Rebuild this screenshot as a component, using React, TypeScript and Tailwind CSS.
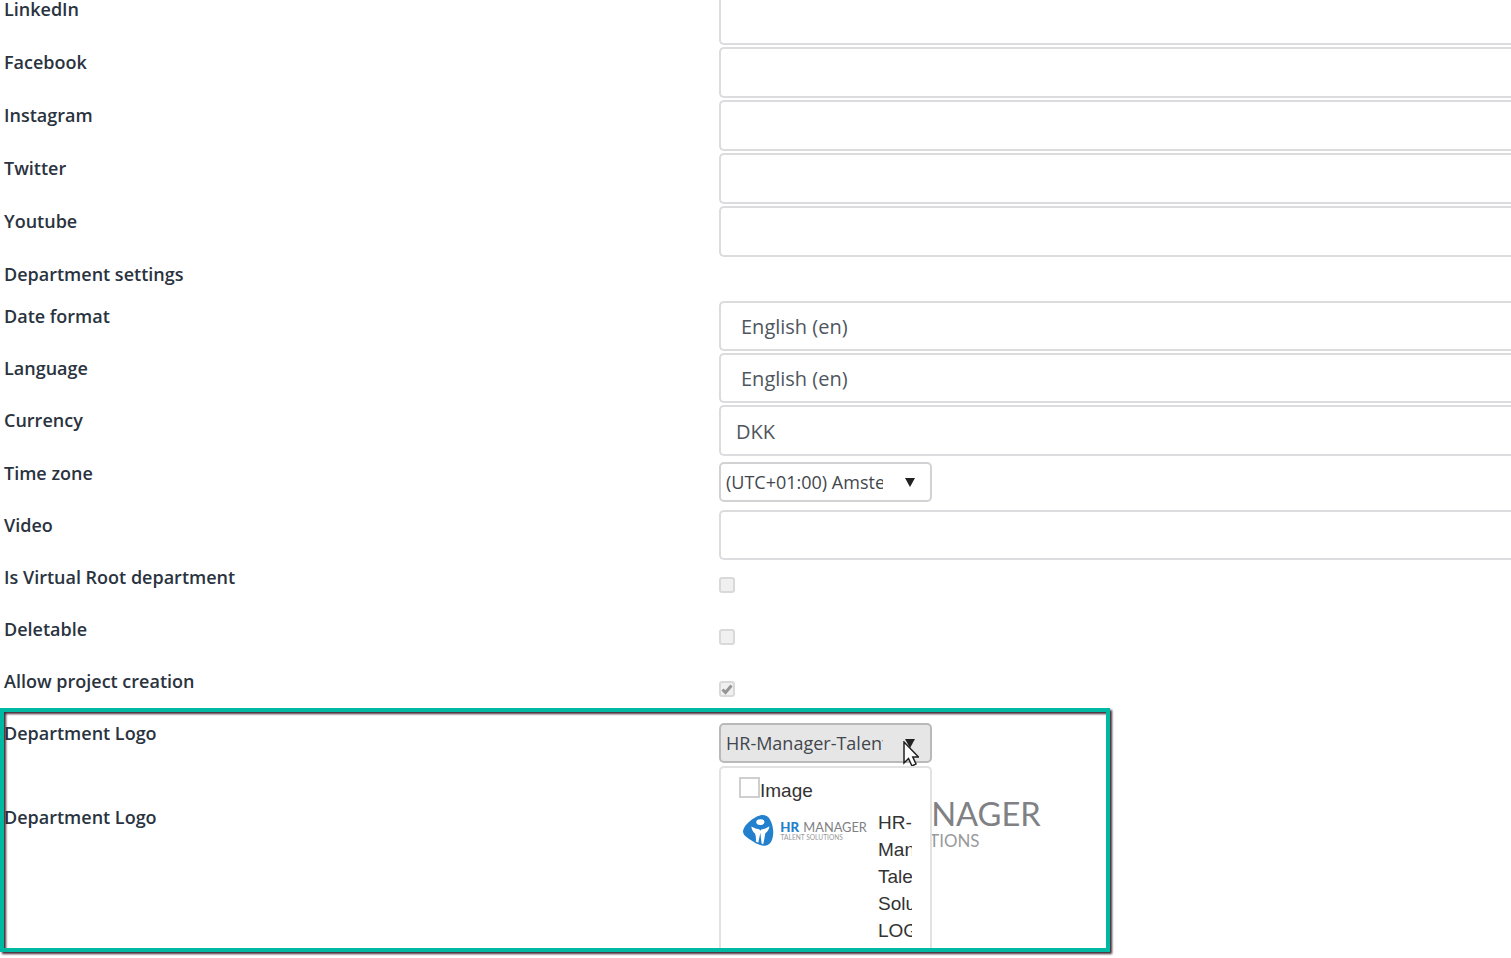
import type { ReactNode } from "react";

const field =
  "block w-full appearance-none rounded-l-[5px] border-2 border-r-0 border-[#dcdcdf] bg-white pt-[2px] text-[20px] text-[#4f565e] outline-none";

function Row({ label, htmlFor, height, children }: { label: string; htmlFor?: string; height: string; children?: ReactNode }) {
  return (
    <div className={`grid grid-cols-[719px_1fr] ${height}`}>
      {htmlFor ? (
        <label htmlFor={htmlFor} className="pt-[3px] pl-1 text-[18px] leading-6 font-semibold text-[#2a3340]">
          {label}
        </label>
      ) : (
        <span className="pt-[3px] pl-1 text-[18px] leading-6 font-semibold text-[#2a3340]">{label}</span>
      )}
      <div className="min-w-0">{children}</div>
    </div>
  );
}

function Caret() {
  return (
    <svg viewBox="0 0 10 9" className="pointer-events-none absolute top-4 right-[17px] h-[9px] w-[10px]" aria-hidden="true">
      <path d="M0 0H10L5 9Z" fill="#222" />
    </svg>
  );
}

function Check({ id, checked = false }: { id: string; checked?: boolean }) {
  return (
    <div className="relative mt-[15px] size-4">
      <input
        id={id}
        type="checkbox"
        disabled
        defaultChecked={checked}
        className="block size-4 appearance-none rounded-[3px] border-2 border-[#d9d9d9] bg-[#f0f0f0]"
      />
      {checked && (
        <svg viewBox="0 0 16 16" className="pointer-events-none absolute inset-0 size-4" aria-hidden="true">
          <path d="M3.5 8.5 6.5 11.5 12.5 4.5" fill="none" stroke="#959595" strokeWidth="3" />
        </svg>
      )}
    </div>
  );
}

function Logo({ className }: { className: string }) {
  return (
    <svg viewBox="0 0 302 75" className={className} role="img" aria-label="HR Manager Talent Solutions">
      <path
        d="M42 1C51-1 61 1 66 10C72 21 75 34 74 46C73 60 68 71 57 74C45 77 28 67 14 57C4 50-1 44 2 35C6 22 26 5 42 1Z"
        fill="#2380cc"
      />
      <ellipse cx="43" cy="17" rx="10" ry="7" fill="#fff" />
      <path d="M21 28C28 32 35 34 41 35L43 38L45 35C52 34 59 31 65 27C64 35 60 40 55 44C53 54 52 63 50 71L46 69L43 43L38 67L32 64C33 56 32 50 30 45C25 41 22 35 21 28Z" fill="#fff" />
      <text x="91" y="40" fill="#2380cc" fontFamily="Lato, sans-serif" fontWeight="900" fontSize="32">
        HR
      </text>
      <text x="147" y="40" fill="#808184" fontFamily="Lato, sans-serif" fontSize="31">
        MANAGER
      </text>
      <text x="92" y="60" fill="#999a9c" fontFamily="Lato, sans-serif" fontSize="16">
        TALENT SOLUTIONS
      </text>
    </svg>
  );
}

export default function App() {
  return (
    <main className="overflow-hidden bg-white pb-[6px] font-['Open_Sans',sans-serif]">
      <form className="-mt-[6px]">
        {["LinkedIn", "Facebook", "Instagram", "Twitter", "Youtube"].map((name) => (
          <Row key={name} label={name} htmlFor={name} height="h-[53px]">
            <input id={name} type="text" className={`${field} h-[51px] px-4`} />
          </Row>
        ))}
        <Row label="Department settings" height="h-[42px]" />
        <Row label="Date format" htmlFor="date-format" height="h-[52px]">
          <select id="date-format" className={`${field} h-[50px] pl-5`}>
            <option>English (en)</option>
          </select>
        </Row>
        <Row label="Language" htmlFor="language" height="h-[52px]">
          <select id="language" className={`${field} h-[50px] pl-5`}>
            <option>English (en)</option>
          </select>
        </Row>
        <Row label="Currency" htmlFor="currency" height="h-[53px]">
          <input id="currency" type="text" defaultValue="DKK" className={`${field} h-[51px] px-[15px]`} />
        </Row>
        <Row label="Time zone" htmlFor="time-zone" height="h-[52px]">
          <div className="relative mt-1 w-[213px]">
            <select
              id="time-zone"
              className="block h-10 w-full appearance-none rounded-[5px] border-2 border-[#d2d2d4] bg-white pr-[47px] pl-[5px] text-[18px] text-[#42474e] outline-none"
            >
              <option>(UTC+01:00) Amsterdam</option>
            </select>
            <Caret />
          </div>
        </Row>
        <Row label="Video" htmlFor="video" height="h-[52px]">
          <input id="video" type="text" className={`${field} h-[50px] px-4`} />
        </Row>
        <Row label="Is Virtual Root department" htmlFor="virtual-root" height="h-[52px]">
          <Check id="virtual-root" />
        </Row>
        <Row label="Deletable" htmlFor="deletable" height="h-[52px]">
          <Check id="deletable" />
        </Row>
        <Row label="Allow project creation" htmlFor="allow-project" height="h-[52px]">
          <Check id="allow-project" checked />
        </Row>

        <section className="relative">
          <Row label="Department Logo" htmlFor="logo-picker" height="h-[84px]">
            <div className="relative z-10 mt-[5px] w-[213px]">
              <button
                id="logo-picker"
                type="button"
                aria-expanded="true"
                className="block h-10 w-full rounded-[5px] border-2 border-[#b9b9b9] bg-[#e6e6e6] pr-[47px] pl-[5px] text-left text-[18px] text-[#42474e]"
              >
                <span className="block overflow-hidden whitespace-nowrap">HR-Manager-Talent-Solutions-LOGO</span>
              </button>
              <Caret />
              <svg viewBox="0 0 16 26" className="pointer-events-none absolute top-[18px] right-[13px] h-[26px] w-4" aria-hidden="true">
                <path d="M1 1V22L5.5 17.5 9 25 13 23 9.8 16H15.5Z" fill="#fff" stroke="#222" strokeWidth="1.5" />
              </svg>
              <div className="absolute top-[43px] left-0 h-[182px] w-full overflow-hidden rounded-t-[5px] border-2 border-b-0 border-[#e2e2e2] bg-white px-[18px] pt-[9px] font-['Liberation_Sans',sans-serif] text-[19px] leading-[27px] text-[#333]">
                <label className="flex">
                  <input type="checkbox" className="size-[21px] appearance-none border-2 border-[#cfcfcf] bg-white" />
                  Image
                </label>
                <div className="mt-[5px] flex">
                  <Logo className="mt-[6px] ml-[3px] h-[31px] w-[126px] shrink-0" />
                  <span className="ml-[10px] min-w-0 flex-1 overflow-hidden">HR-Manager-Talent-Solutions-LOGO</span>
                </div>
              </div>
            </div>
          </Row>
          <Row label="Department Logo" height="h-[150px]">
            <Logo className="-mt-[18px] ml-1 h-[79px] w-[320px]" />
          </Row>
          <div className="pointer-events-none absolute -top-[10px] left-0 z-20 h-[244px] w-[1110px] border-4 border-[#00b9a2] drop-shadow-[2px_2px_1px_rgba(45,15,30,0.9)]" />
        </section>
      </form>
    </main>
  );
}
